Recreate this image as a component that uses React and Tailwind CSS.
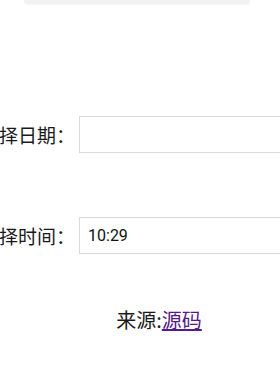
export default function App() {
  const font = { fontFamily: '"Noto Sans CJK SC", "Noto Sans", sans-serif' };
  return (
    <div
      className="w-[280px] h-[380px] overflow-hidden bg-white text-[#1a1a1a]"
      style={font}
    >
      {/* bottom of a card above the viewport */}
      <div className="ml-[24px] w-[226px] h-[4px] rounded-b-[14px] bg-[#f2f2f2] shadow-[0_1px_2px_rgba(0,0,0,0.04)]" />

      <div className="mt-[112px] ml-[-20px] flex items-center">
        <label className="text-[19px] leading-[24px] whitespace-nowrap">选择日期：</label>
        <input
          type="text"
          readOnly
          className="ml-[4px] w-[240px] h-[37px] shrink-0 border border-[#dadada] bg-white px-2 text-[16px] outline-none"
        />
      </div>

      <div className="mt-[64px] ml-[-20px] flex items-center">
        <label className="text-[19px] leading-[24px] whitespace-nowrap">选择时间：</label>
        <input
          type="text"
          readOnly
          value="10:29"
          className="ml-[4px] w-[240px] h-[37px] shrink-0 border border-[#dadada] bg-white px-2 text-[16px] text-[#111] outline-none"
          style={{ fontFamily: "Roboto, sans-serif" }}
        />
      </div>

      <div className="mt-[52px] flex justify-center pl-[38px] text-[20px] leading-[28px]">
        <span>来源:</span>
        <a href="#" className="text-[#551a8b] underline">
          源码
        </a>
      </div>
    </div>
  );
}
